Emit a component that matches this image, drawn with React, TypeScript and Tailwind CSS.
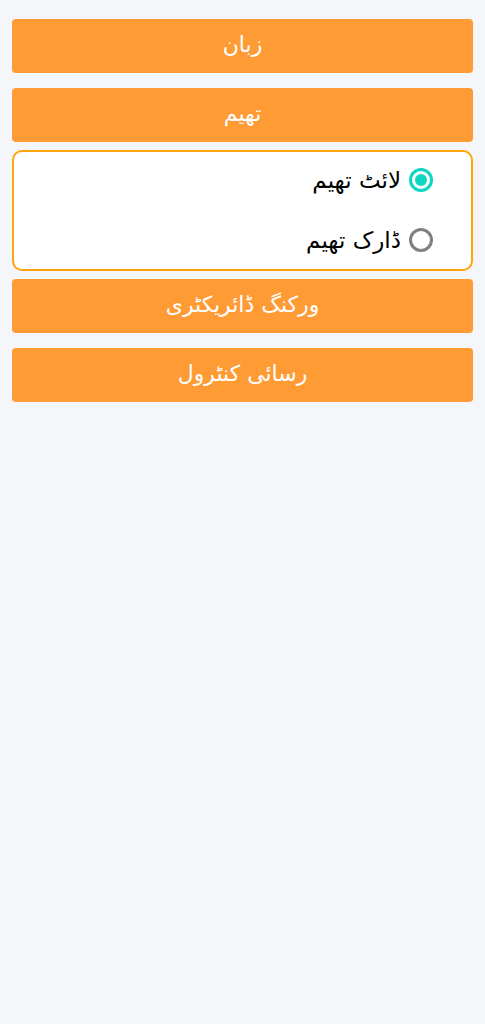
import React from "react";

const font = { fontFamily: '"DejaVu Sans", "Noto Sans", sans-serif' };

function Btn({ label }: { label: string }) {
  return (
    <div className="h-[54px] w-full rounded-[4px] bg-[#ff9b35] flex items-center justify-center pb-[3px] text-white text-[22px]">
      {label}
    </div>
  );
}

function Radio({ checked }: { checked: boolean }) {
  return checked ? (
    <div className="w-[24px] h-[24px] rounded-full border-[3px] border-[#0fd5c3] flex items-center justify-center">
      <div className="w-[12px] h-[12px] rounded-full bg-[#0fd5c3]" />
    </div>
  ) : (
    <div className="w-[24px] h-[24px] rounded-full border-[3px] border-[#808080]" />
  );
}

export default function App() {
  return (
    <div dir="rtl" className="min-h-[1024px] bg-[#f5f6fa] px-[12px] pt-[19px] flex flex-col" style={font}>
      <Btn label="زبان" />
      <div className="h-[15px]" />
      <Btn label="تھیم" />
      <div className="h-[8px]" />
      <div className="h-[121px] rounded-[10px] border-2 border-[#ffa40a] bg-white flex flex-col pr-[38px]">
        <div className="h-[56px] flex items-center gap-[8px]">
          <Radio checked />
          <span className="text-[23px] text-black">لائٹ تھیم</span>
        </div>
        <div className="h-[61px] pt-[3px] flex items-center gap-[8px]">
          <Radio checked={false} />
          <span className="text-[23px] text-black">ڈارک تھیم</span>
        </div>
      </div>
      <div className="h-[8px]" />
      <Btn label="ورکنگ ڈائریکٹری" />
      <div className="h-[15px]" />
      <Btn label="رسائی کنٹرول" />
    </div>
  );
}
